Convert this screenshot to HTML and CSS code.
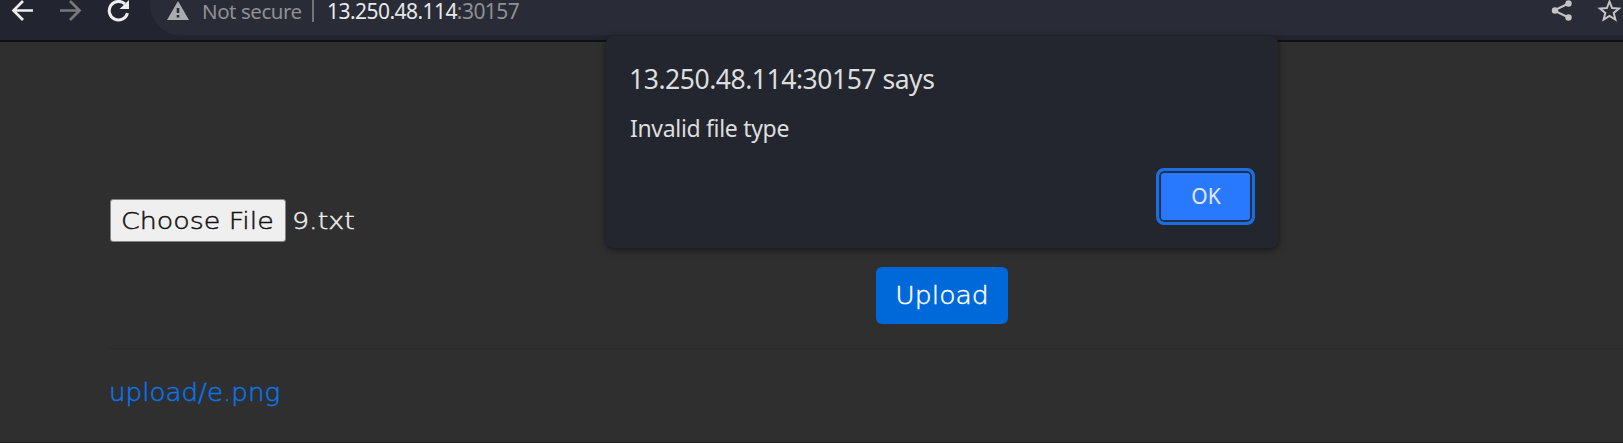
FILE: index.html
```
<!DOCTYPE html>
<html lang="en">
<head>
<meta charset="utf-8">
<title>13.250.48.114:30157</title>
<link rel="stylesheet" href="styles.css">
</head>
<body>
<header class="toolbar">
  <svg class="nav" width="150" height="40" viewBox="0 0 150 40" fill="none" stroke-width="2.7">
    <path stroke="#eeeeee" d="M33 10.5H14M23 1 13.5 10.5 23 20"/>
    <path stroke="#79797c" d="M60 10.5H79M70 1 79.500 10.500 70 20"/>
    <path stroke="#eeeeee" stroke-width="3" d="M127.500 13.200A9.300 9.300 0 1 1 125 4"/>
    <path fill="#eeeeee" d="M129 0V9H119.500Z"/>
  </svg>
  <div class="address">
    <svg class="warning" width="22" height="19" viewBox="0 0 22 19"><path fill="#a9abb0" d="M11 0 22 19H0Z"/><path fill="#292b36" d="M9.700 7h2.600v5H9.700zM9.700 14h2.600v2.600H9.700z"/></svg>
    <span class="security">Not secure</span>
    <span class="separator"></span>
    <span class="url">13.250.48.114<span class="port">:30157</span></span>
    <svg class="actions" width="75" height="24" viewBox="0 0 75 24">
      <path d="M20.500 3.500 6 10.500 20.500 17.500" fill="none" stroke="#c4c4c6" stroke-width="2"/>
      <g fill="#c4c4c6"><circle cx="20.500" cy="3.500" r="3.200"/><circle cx="7" cy="10.500" r="3.200"/><circle cx="20.500" cy="17.500" r="3.200"/></g>
      <path d="M61.500 1.500 64.100 8 71 8.500 65.700 12.900 67.400 19.500 61.500 15.900 55.600 19.500 57.300 12.900 52 8.500 58.900 8Z" fill="none" stroke="#c4c4c6" stroke-width="2"/>
    </svg>
  </div>
</header>
<main class="page">
  <div class="file-row">
    <button class="choose"><span class="choose-text">Choose File</span></button>
    <span class="filename">9.txt</span>
  </div>
  <div class="submit-row"><button class="upload"><span class="upload-text">Upload</span></button></div>
  <hr class="rule">
  <a class="link">upload/e.png</a>
</main>
<section class="dialog">
  <div class="title">13.250.48.114:30157 says</div>
  <div class="message">Invalid file type</div>
  <button class="ok">OK</button>
</section>
</body>
</html>
```
FILE: styles.css
```
* { box-sizing: border-box; }
body { margin: 0; width: 1623px; height: 443px; overflow: hidden; background: #2f2f2f; font-family: "Noto Sans", sans-serif; }
button { margin: 0; padding: 0; font: inherit; }
.toolbar { display: flex; height: 42px; background: #22252f; border-bottom: 2px solid #101116; }
.nav { flex: none; }
.address { display: flex; flex: 1; height: 35px; padding-left: 17px; background: #292b36; border-radius: 0 0 0 30px; }
.warning { margin-top: 1px; flex: none; }
.security { width: 98px; margin-left: 13px; font-size: 20.5px; letter-spacing: -0.45px; line-height: 22px; color: #8f9093; white-space: nowrap; }
.separator { width: 2px; height: 22px; margin-left: 12px; background: #737479; }
.url { margin-left: 13px; font-size: 21px; letter-spacing: -0.55px; line-height: 22px; color: #e8e8e8; white-space: nowrap; }
.port { color: #8f9093; }
.actions { margin-left: auto; margin-right: 0; }
.page { height: 401px; padding: 157px 0 0 110px; border-bottom: 1px solid #1c1c1c; font-family: "DejaVu Sans", sans-serif; font-weight: 200; -webkit-text-stroke: 0.45px; }
.file-row { display: flex; height: 43px; }
.choose { width: 176px; height: 43px; border: 1px solid #858585; border-radius: 3px; background: #efefef; color: #111; font-size: 23px; white-space: nowrap; }
.choose-text { display: inline-block; transform: translateX(-1px) scaleX(1.17); }
.filename { display: inline-block; transform: scaleX(1.17); transform-origin: left; margin-left: 6px; color: #eee; font-size: 23px; line-height: 44px; }
.submit-row { padding: 25px 0 0 766px; }
.upload { display: block; width: 132px; height: 57px; border: 0; border-radius: 6px; background: #0069d9; color: #fff; font-size: 24px; }
.upload-text { display: inline-block; transform: scaleX(1.11); }
.rule { height: 1px; margin: 24px 0 0; border: 0; background: #292929; }
.link { display: inline-block; margin-top: 27px; color: #0876ed; font-size: 24px; line-height: 34px; transform: translateX(-1px) scaleX(1.09); transform-origin: left; }
.dialog { position: absolute; left: 606px; top: 36px; width: 672px; height: 212px; padding: 23px 24px; border-radius: 7px; background: #23262f; box-shadow: 0 2px 7px #0008; color: #dedede; }
.title { margin-left: -1px; font-size: 26.5px; letter-spacing: -0.46px; line-height: 40px; white-space: nowrap; }
.message { margin-top: 9px; font-size: 23px; letter-spacing: -0.32px; line-height: 40px; }
.ok { display: block; width: 99px; height: 57px; margin: 20px 0 0 526px; border: 3px solid #1a6fe0; border-radius: 8px; background: #2979ff; box-shadow: inset 0 0 0 2px #20304e; color: #e4e8ff; font-size: 21px; line-height: 48px; padding: 0 0 2px 1px; }
```
